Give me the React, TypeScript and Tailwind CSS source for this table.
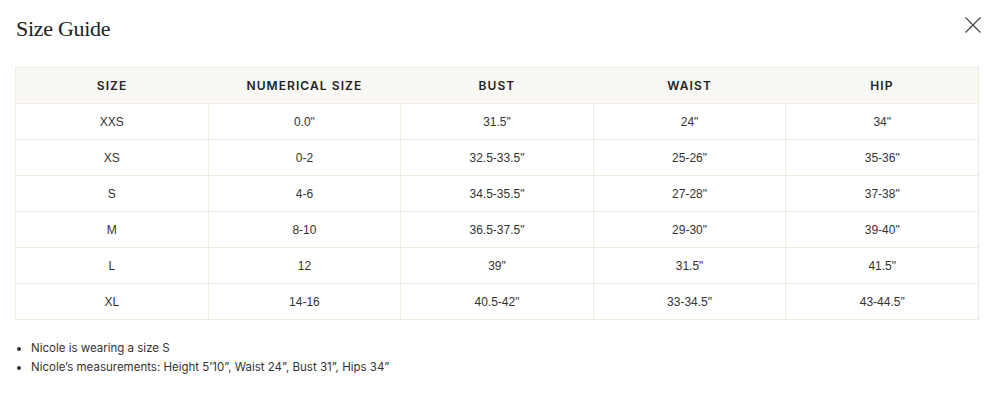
import React from 'react';

const rows = [
  ['XXS', '0.0"', '31.5"', '24"', '34"'],
  ['XS', '0-2', '32.5-33.5"', '25-26"', '35-36"'],
  ['S', '4-6', '34.5-35.5"', '27-28"', '37-38"'],
  ['M', '8-10', '36.5-37.5"', '29-30"', '39-40"'],
  ['L', '12', '39"', '31.5"', '41.5"'],
  ['XL', '14-16', '40.5-42"', '33-34.5"', '43-44.5"'],
];

const headers = ['Size', 'Numerical Size', 'Bust', 'Waist', 'Hip'];

export default function App() {
  return (
    <div className="w-[997px] h-[407px] bg-white px-[15px] pt-[14px] font-['Liberation_Sans',Arial,sans-serif] text-[#333]">
      <div className="flex items-start justify-between">
        <h2 className="font-['Liberation_Serif','DejaVu_Serif',serif] text-[22px] leading-[30px] tracking-[-0.3px] text-[#222] pl-[1px]">
          Size Guide
        </h2>
        <button className="mt-[3px] mr-[1px] w-[16px] h-[16px] text-[#444]">
          <svg viewBox="0 0 16 16" width="16" height="16" fill="none" stroke="currentColor" strokeWidth="1.2">
            <path d="M0.5 0.5L15.5 15.5M15.5 0.5L0.5 15.5" />
          </svg>
        </button>
      </div>

      {/* Table */}
      <table className="mt-[23px] w-[964px] table-fixed border-collapse border border-[#efebde]">
        <thead>
          <tr className="bg-[#f9f8f4] h-[36px]">
            {headers.map(h => (
              <th
                key={h}
                className="text-center uppercase text-[12px] font-semibold tracking-[0.09em] text-[#222] font-['Inter',sans-serif]"
              >
                {h}
              </th>
            ))}
          </tr>
        </thead>
        <tbody>
          {rows.map(r => (
            <tr key={r[0]} className="h-[36px] border-t border-[#efebde]">
              {r.map((c, i) => (
                <td key={i} className="text-center text-[12px] border-l border-[#efebde] first:border-l-0">
                  {c}
                </td>
              ))}
            </tr>
          ))}
        </tbody>
      </table>

      <ul className="mt-[19px] list-disc pl-[16px] text-[11.5px] leading-[19px] text-[#333] font-['Inter',sans-serif]">
        <li>Nicole is wearing a size S</li>
        <li>Nicole’s measurements: Height 5’10”, Waist 24”, Bust 31”, Hips 34”</li>
      </ul>
    </div>
  );
}
